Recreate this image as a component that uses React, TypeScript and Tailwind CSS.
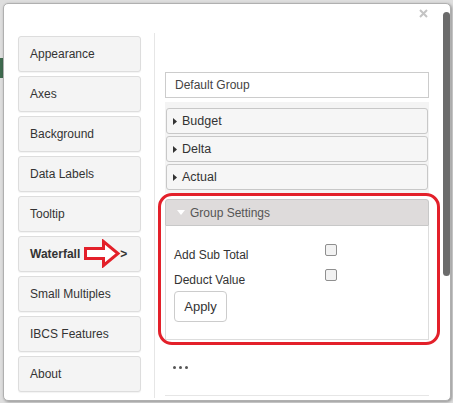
import React from "react";

const menuItems = [
    "Appearance",
    "Axes",
    "Background",
    "Data Labels",
    "Tooltip",
    "Waterfall",
    "Small Multiples",
    "IBCS Features",
    "About",
];

const groups = ["Budget", "Delta", "Actual"];

const Caret = () => (
    <svg width="4" height="7" viewBox="0 0 4 7" className="shrink-0">
        <path d="M0 0 L4 3.5 L0 7 Z" fill="#333" />
    </svg>
);

const App = () => {
    return (
        <div className="relative w-[453px] h-[403px] overflow-hidden bg-[#dedede] pt-[3px] pl-[3px] font-['Liberation_Sans',Arial,sans-serif]">
            {/* page behind the dialog */}
            <div className="absolute left-0 top-[58px] w-[4px] h-[20px] bg-[#3f6b4f]" />

            <div className="relative w-[448px] h-[398px] bg-white border border-[#b0b0b0] rounded-[5px] shadow-[1px_1px_3px_rgba(0,0,0,0.35)]">
                {/* close */}
                <svg className="absolute left-[415px] top-[5px]" width="9" height="9" viewBox="0 0 9 9">
                    <path d="M1 1 L8 8 M8 1 L1 8" stroke="#c4c4c4" strokeWidth="2" />
                </svg>
                {/* scrollbar thumb */}
                <div className="absolute left-[439px] top-[8px] w-[7px] h-[264px] rounded-full bg-[#6b6b6b]" />

                <div className="flex mt-[29px] h-[365px]">
                    {/* SIDEBAR */}
                    <div className="w-[151px] border-r border-[#e6e6e6] pl-[14px] pt-[3px] flex flex-col gap-[4px]">
                        {menuItems.map((item) => (
                            <div
                                key={item}
                                className="w-[123px] h-[36px] shrink-0 flex items-center pl-[11px] bg-[#f4f4f4] border border-[#dddddd] rounded-[3px] text-[12px] text-[#333] shadow-[0_1px_1px_rgba(0,0,0,0.05)]"
                            >
                                {item === "Waterfall" ? (
                                    <span className="font-bold">
                                        Waterfall<span className="ml-[40px]">&gt;</span>
                                    </span>
                                ) : (
                                    item
                                )}
                            </div>
                        ))}
                    </div>

                    {/* SETTINGS */}
                    <div className="flex-1 pl-[10px]">
                        <div className="mt-[39px] w-[264px] h-[26px] border border-[#cccccc] flex items-center px-[9px] text-[12px] text-[#444]">
                            Default Group
                        </div>

                        <div className="mt-[4px] w-[264px] bg-[#f4f4f4] pt-[6px] px-[1px] pb-[3px] flex flex-col gap-[2px]">
                            {groups.map((g) => (
                                <div
                                    key={g}
                                    className="h-[26px] flex items-center gap-[5px] pl-[6px] bg-[#f6f6f6] border border-[#c8c8c8] rounded-[3px] text-[12.5px] text-[#333]"
                                >
                                    <Caret />
                                    {g}
                                </div>
                            ))}
                        </div>

                        <div className="mt-[6px] w-[264px]">
                            <div className="h-[27px] flex items-center gap-[5px] pl-[11px] bg-[#dedbdb] border border-[#c8c8c8] rounded-t-[3px] text-[12px] text-[#555]">
                                <svg width="8" height="5" viewBox="0 0 8 5">
                                    <path d="M0 0 L8 0 L4 5 Z" fill="#fff" />
                                </svg>
                                Group Settings
                            </div>
                            <div className="h-[114px] border border-t-0 border-[#dddddd] pl-[8px] pt-[18px] text-[12px] text-[#333]">
                                <div className="flex items-start h-[25px]">
                                    <span className="w-[151px] mt-[4px] leading-[14px]">Add Sub Total</span>
                                    <span className="w-[12px] h-[12px] rounded-[2px] border border-[#8f8f8f] bg-[#f2f2f2]" />
                                </div>
                                <div className="flex items-start h-[22px]">
                                    <span className="w-[151px] mt-[4px] leading-[14px]">Deduct Value</span>
                                    <span className="w-[12px] h-[12px] rounded-[2px] border border-[#8f8f8f] bg-[#f2f2f2]" />
                                </div>
                                <button className="w-[53px] h-[31px] border border-[#cccccc] rounded-[4px] bg-white text-[13px] text-[#333]">
                                    Apply
                                </button>
                            </div>
                        </div>

                        <div className="mt-[26px] pl-[8px] flex gap-[3px]">
                            <span className="w-[3px] h-[3px] rounded-full bg-[#555]" />
                            <span className="w-[3px] h-[3px] rounded-full bg-[#555]" />
                            <span className="w-[3px] h-[3px] rounded-full bg-[#555]" />
                        </div>

                        <div className="mt-[26px] w-[264px] border-t border-[#e6e6e6]" />
                    </div>
                </div>

                {/* annotation: red outline */}
                <div className="absolute left-[154px] top-[189px] w-[282px] h-[152px] border-[3px] border-[#e3202a] rounded-[14px]" />

                {/* annotation: red arrow */}
                <svg className="absolute left-[79px] top-[235px]" width="38" height="29" viewBox="0 0 38 29">
                    <path
                        d="M2.5 9.5 L20.5 9.5 L20.5 2.5 L35 14.5 L20.5 26.5 L20.5 19.5 L2.5 19.5 Z"
                        fill="#fff"
                        stroke="#e3202a"
                        strokeWidth="3"
                    />
                </svg>
            </div>
        </div>
    );
};

export default App;
